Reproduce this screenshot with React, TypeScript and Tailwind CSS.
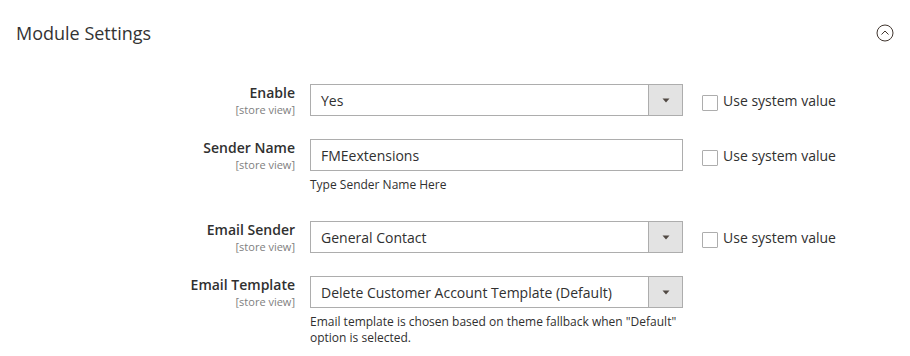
import type { ReactNode } from "react";

const font = { fontFamily: '"Open Sans", "Liberation Sans", sans-serif' };

function Arrow() {
    return (
        <svg width="8" height="5" viewBox="0 0 8 5">
            <path d="M0.5 0.5 L7.5 0.5 L4 4.5 Z" fill="#514943" />
        </svg>
    );
}

function SelectBox({ value }: { value: string }) {
    return (
        <div className="flex h-[32px] w-[373px] border border-[#adadad] bg-white">
            <div className="flex flex-1 items-center pl-[10px] text-[14px] text-[#303030]">
                {value}
            </div>
            <div className="flex w-[34px] items-center justify-center border-l border-[#adadad] bg-[#e3e3e3]">
                <Arrow />
            </div>
        </div>
    );
}

function TextBox({ value }: { value: string }) {
    return (
        <div className="flex h-[32px] w-[373px] items-center border border-[#adadad] bg-white pl-[10px] text-[14px] text-[#303030]">
            {value}
        </div>
    );
}

function UseSystem() {
    return (
        <div className="ml-[19px] mt-[8px] flex items-start gap-[5px]">
            <div className="mt-[3px] h-[16px] w-[16px] rounded-[1px] border border-[#adadad] bg-white" />
            <span className="text-[14px] leading-[18px] text-[#303030]">Use system value</span>
        </div>
    );
}

function Row({
    label,
    control,
    note,
    system,
    className,
}: {
    label: string;
    control: ReactNode;
    note?: ReactNode;
    system?: boolean;
    className?: string;
}) {
    return (
        <div className={`flex items-start ${className ?? ""}`}>
            <div className="w-[295px] pt-[1px] text-right">
                <div className="text-[14px] font-semibold leading-[16px] text-[#303030]">{label}</div>
                <div className="mt-[2px] text-[11px] leading-[13px] text-[#808080]">[store view]</div>
            </div>
            <div className="ml-[15px] w-[373px]">
                {control}
                {note && (
                    <div className="mt-[6px] text-[12px] leading-[16px] text-[#303030]">{note}</div>
                )}
            </div>
            {system && <UseSystem />}
        </div>
    );
}

export default function App() {
    return (
        <div className="min-h-[356px] w-full bg-white" style={font}>
            <div className="flex items-center justify-between pl-[16px] pr-[16px] pt-[21px]">
                <h2 className="text-[18px] font-normal leading-[24px] text-[#333333]">Module Settings</h2>
                <svg width="18" height="18" viewBox="0 0 18 18">
                    <circle cx="9" cy="9" r="8" fill="none" stroke="#41362f" strokeWidth="1" />
                    <path d="M5.5 10.5 L9 7 L12.5 10.5" fill="none" stroke="#41362f" strokeWidth="1" />
                </svg>
            </div>

            <div className="mt-[39px]">
                <Row className="mb-[23px]" label="Enable" control={<SelectBox value="Yes" />} system />
                <Row
                    className="mb-[28px]"
                    label="Sender Name"
                    control={<TextBox value="FMEextensions" />}
                    note="Type Sender Name Here"
                    system
                />
                <Row
                    className="mb-[23px]"
                    label="Email Sender"
                    control={<SelectBox value="General Contact" />}
                    system
                />
                <Row
                    label="Email Template"
                    control={<SelectBox value="Delete Customer Account Template (Default)" />}
                    note={
                        <>
                            Email template is chosen based on theme fallback when &quot;Default&quot; option is
                            selected.
                        </>
                    }
                />
            </div>
        </div>
    );
}
